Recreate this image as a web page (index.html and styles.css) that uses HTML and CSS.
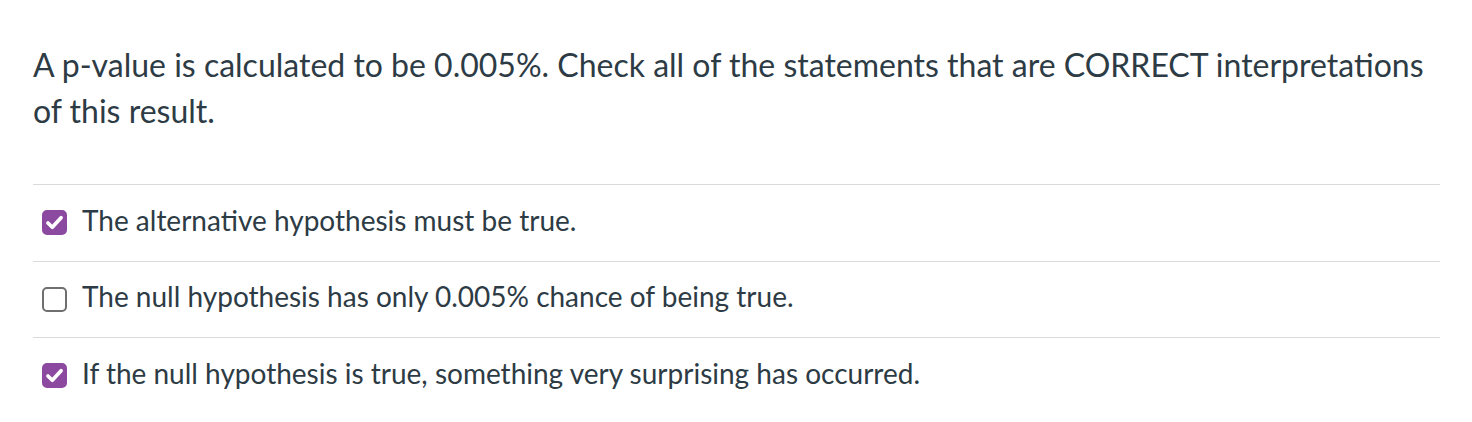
FILE: index.html
```html
<!DOCTYPE html>
<html lang="en">
<head>
<meta charset="utf-8">
<title>Question</title>
<link rel="stylesheet" href="styles.css">
</head>
<body>
<div class="question">
  <p class="prompt">A p-value is calculated to be 0.005%. Check all of the statements that are CORRECT interpretations of this result.</p>
  <div class="answers">
    <label class="answer">
      <span class="box checked"><svg viewBox="0 0 24 24" width="21" height="21"><path d="M4.5 12.5 L9.5 17.5 L19.5 6.5" fill="none" stroke="#fff" stroke-width="4.2" stroke-linecap="round" stroke-linejoin="round"/></svg></span>
      <span class="text">The alternative hypothesis must be true.</span>
    </label>
    <label class="answer">
      <span class="box"></span>
      <span class="text">The null hypothesis has only 0.005% chance of being true.</span>
    </label>
    <label class="answer">
      <span class="box checked"><svg viewBox="0 0 24 24" width="21" height="21"><path d="M4.5 12.5 L9.5 17.5 L19.5 6.5" fill="none" stroke="#fff" stroke-width="4.2" stroke-linecap="round" stroke-linejoin="round"/></svg></span>
      <span class="text">If the null hypothesis is true, something very surprising has occurred.</span>
    </label>
  </div>
</div>
</body>
</html>
```
FILE: styles.css
```css
html, body {
  margin: 0;
  padding: 0;
  background: #ffffff;
}
body {
  font-family: Lato, "Noto Sans", sans-serif;
  color: #2d3b45;
}
.question {
  padding: 42px 32px 0 33px;
}
.prompt {
  margin: 0;
  font-size: 32px;
  line-height: 46px;
}
.answers {
  margin-top: 50px;
}
.answer {
  display: flex;
  align-items: center;
  gap: 15px;
  box-sizing: border-box;
  height: 76.5px;
  border-top: 1px solid #dadada;
  padding-left: 9px;
  font-size: 28px;
}
.text {
  margin-bottom: 6px;
}
.box {
  width: 25px;
  height: 25px;
  box-sizing: border-box;
  border: 2px solid #6f6f6f;
  border-radius: 5px;
  display: flex;
  align-items: center;
  justify-content: center;
  flex: none;
}
.box.checked {
  background: #8b4a9f;
  border-color: #8b4a9f;
}
.box svg {
  display: block;
}
```
